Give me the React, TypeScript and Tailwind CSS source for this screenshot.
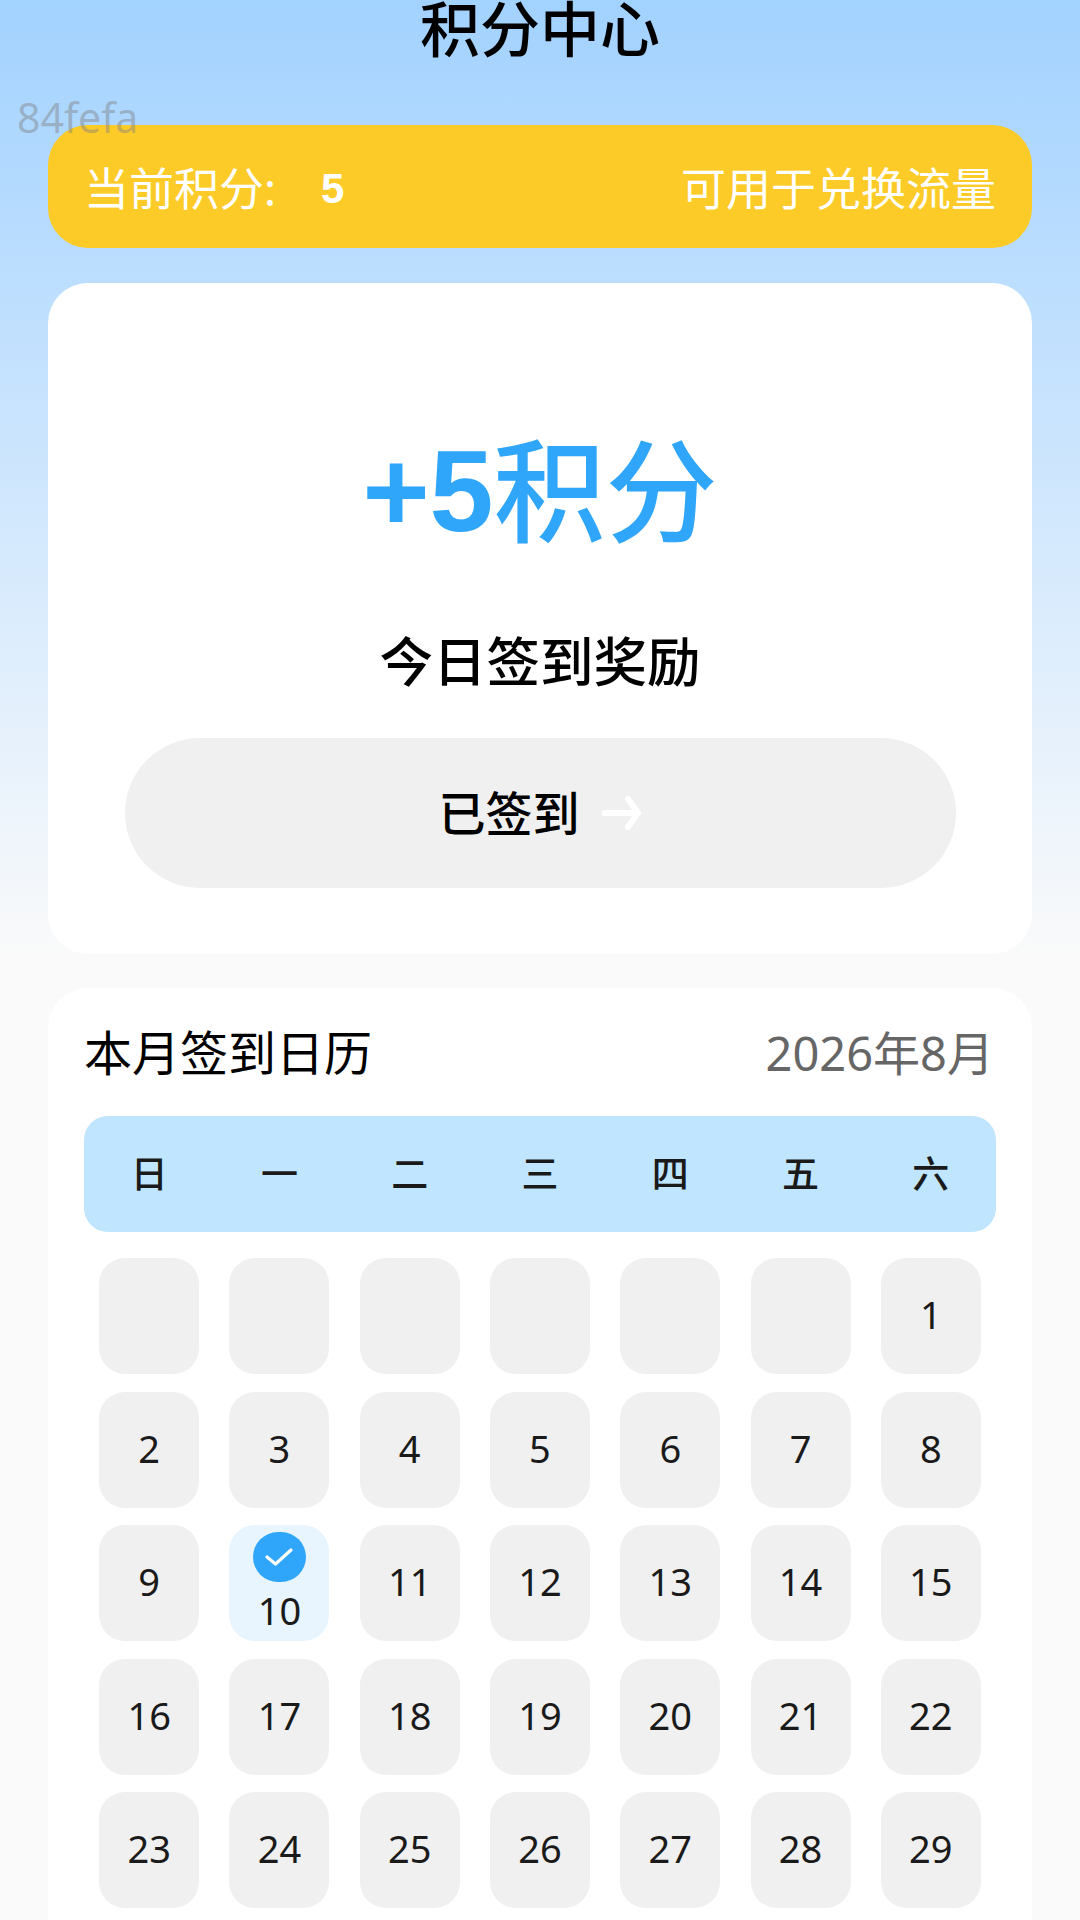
const FONT = { fontFamily: '"Noto Sans", "Noto Sans CJK SC", sans-serif' };
const ARIAL = { fontFamily: '"Liberation Sans", sans-serif' };

const WEEK = ["日", "一", "二", "三", "四", "五", "六"];
const DAYS: (number | null)[] = [
  null, null, null, null, null, null,
  ...Array.from({ length: 29 }, (_, i) => i + 1),
];

function DayCell({ day }: { day: number | null }) {
  if (day === 10) {
    return (
      <div className="mx-auto flex h-[116px] w-[100px] flex-col items-center rounded-[26px] bg-[#e8f5ff] pt-[7px]">
        <div className="flex h-[50px] w-[53px] items-center justify-center rounded-full bg-[#2fa6fa]">
          <svg width="32" height="24" viewBox="0 0 32 24" fill="none">
            <path d="M4 12 L12.5 19 L28 5" stroke="#fff" strokeWidth="3.2" strokeLinecap="round" strokeLinejoin="round" />
          </svg>
        </div>
        <div className="mt-[5px] text-[38px] leading-[46px] text-[#1a1a1a]">10</div>
      </div>
    );
  }
  return (
    <div className="mx-auto flex h-[116px] w-[100px] items-center justify-center rounded-[26px] bg-[#f0f0f0] pb-[3px] text-[38px] text-[#1a1a1a]">
      {day}
    </div>
  );
}

export default function App() {
  return (
    <div
      style={FONT}
      className="relative h-[1920px] w-[1080px] overflow-hidden bg-gradient-to-b from-[#a2d2ff] from-0% to-[#fafafa] to-[50%]"
    >
      <div className="flex h-[58px] items-center justify-center text-[60px] font-medium leading-none text-black">
        积分中心
      </div>

      <div className="absolute left-[17px] top-[95px] text-[41px] leading-[44px] text-[#808080]/45">84fefa</div>

      <div className="mx-[48px] mt-[67px] flex h-[123px] items-center justify-between rounded-[40px] bg-[#fdcb28] px-[36px] pt-[4px] text-[45px] text-white">
        <div className="flex items-center">
          <span>当前积分:</span>
          <span style={ARIAL} className="ml-[45px] text-[42px] font-bold">5</span>
        </div>
        <span>可用于兑换流量</span>
      </div>

      <div className="mx-[48px] mt-[35px] flex h-[671px] flex-col items-center rounded-[40px] bg-white">
        <div className="mt-[133px] flex h-[150px] items-center text-[112px] font-medium leading-none text-[#2fa6fa]">
          <span style={ARIAL} className="text-[115px] font-bold">+5</span>
          <span>积分</span>
        </div>
        <div className="mt-[61px] text-[53.5px] font-medium leading-[70px] text-black">今日签到奖励</div>
        <div className="mt-[41px] flex h-[150px] w-[831px] items-center justify-center rounded-full bg-[#f0f0f0]">
          <span className="text-[47px] font-medium text-black">已签到</span>
          <svg className="ml-[22px]" width="40" height="36" viewBox="0 0 40 36" fill="none">
            <path d="M2 18 H36 M26 4 L36 18 L26 32" stroke="#fff" strokeWidth="6" strokeLinecap="round" strokeLinejoin="round" />
          </svg>
        </div>
      </div>

      <div className="mx-[48px] mt-[34px] h-[1000px] rounded-[40px] bg-white px-[36px]">
        <div className="flex h-[128px] items-center justify-between pt-[2px]">
          <span className="text-[48px] text-black">本月签到日历</span>
          <span className="mr-[2px] text-[47px] text-[#666666]">2026年8月</span>
        </div>
        <div className="grid h-[116px] grid-cols-7 items-center rounded-[24px] bg-[#bfe5ff] text-center text-[37px] font-medium text-[#1a1a1a]">
          {WEEK.map((w) => (
            <div key={w}>{w}</div>
          ))}
        </div>
        <div className="mt-[26px] grid grid-cols-7 gap-y-[17.5px]">
          {DAYS.map((d, i) => (
            <DayCell key={i} day={d} />
          ))}
        </div>
      </div>
    </div>
  );
}
